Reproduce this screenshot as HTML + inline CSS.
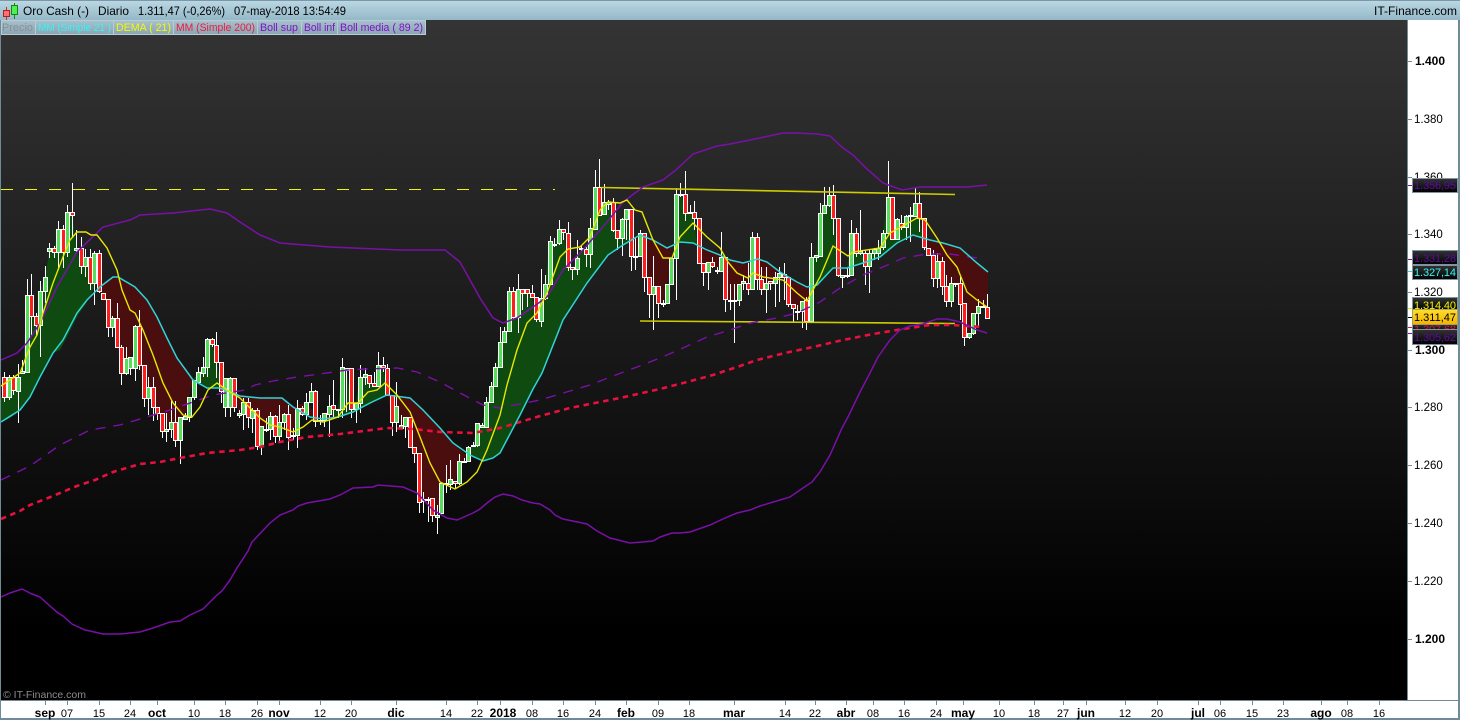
<!DOCTYPE html>
<html><head><meta charset="utf-8"><title>Oro Cash</title>
<style>
html,body{margin:0;padding:0;background:#fff;width:1460px;height:720px;overflow:hidden}
svg{display:block}
text{font-family:"Liberation Sans",Arial,sans-serif}
</style></head>
<body>
<svg width="1460" height="720" viewBox="0 0 1460 720" xmlns="http://www.w3.org/2000/svg">
<defs>
<linearGradient id="bg" x1="0" y1="0" x2="0" y2="1"><stop offset="0" stop-color="#343434"/><stop offset=".9" stop-color="#000"/><stop offset="1" stop-color="#000"/></linearGradient>
<linearGradient id="hd" x1="0" y1="0" x2="0" y2="1"><stop offset="0" stop-color="#bcd8e4"/><stop offset="1" stop-color="#94b8c8"/></linearGradient>
<linearGradient id="lg" x1="0" y1="0" x2="0" y2="1"><stop offset="0" stop-color="#a8c2ce"/><stop offset="1" stop-color="#88a4b2"/></linearGradient>
<linearGradient id="gold" x1="0" y1="0" x2="0" y2="1"><stop offset="0" stop-color="#ffdc30"/><stop offset="1" stop-color="#f0b400"/></linearGradient>
<linearGradient id="tag" x1="0" y1="0" x2="0" y2="1"><stop offset="0" stop-color="#333"/><stop offset="1" stop-color="#000"/></linearGradient>
</defs>
<rect width="1460" height="720" fill="#fff"/>
<rect x="1" y="20" width="1407" height="680" fill="url(#bg)"/>

<!-- cloud fills -->
<path fill="#0f4a10" d="M1 397L5 397 9 377 14 390 18 377 23 372 27 295 32 316 36 325 40 291 45 277 50 248 54 252 58 229 63 252 68 212 72 215 77 250 81 266 86 257 90 283 95 253 97 283 85 305 78 315 70 331 60 350 53 353 40 377 30 397 20 410 10 418 1 422Z"/>
<path fill="#4a0e0e" d="M97 283L104 299 108 327 113 318 117 347 122 373 126 358 131 357 135 326 140 365 144 398 149 387 153 407 158 413 162 431 167 429 171 422 176 440 180 417 185 416 189 397 193 380 177 358 167 338 157 317 147 300 135 287 118 277 105 281Z"/>
<path fill="#0f4a10" d="M193 380L199 372 203 367 208 339 212 344 217 362 221 388 207 388 193 380Z"/>
<path fill="#4a0e0e" d="M221 388L226 390 234 393 239 414 243 402 248 417 253 410 257 446 262 426 266 429 271 416 275 436 280 422 284 414 289 437 293 435 298 410 310 417 323 419 330 418 338 417 330 406 320 420 306 402 293 407 282 398 260 398 240 396Z"/>
<path fill="#0f4a10" d="M330 414L334 409 338 409 342 367 347 370 351 409 356 403 360 377 365 374 369 383 374 386 378 365 383 367 388 395 370 403 353 412 338 417Z"/>
<path fill="#4a0e0e" d="M388 395L392 422 397 406 401 428 406 417 410 447 415 453 419 502 424 499 428 499 433 515 437 520 442 483 446 483 451 479 455 483 460 461 464 461 466 455 453 443 440 428 423 410 410 398Z"/>
<path fill="#0f4a10" d="M466 455L473 445 478 423 482 425 487 402 491 386 496 367 500 342 505 331 509 291 514 317 518 289 523 293 527 293 532 297 536 319 541 298 545 284 550 241 555 244 559 229 564 232 568 267 573 269 577 258 582 248 586 254 591 228 595 187 600 215 604 202 609 202 613 230 618 238 622 219 627 209 631 240 623 245 608 255 587 283 563 320 542 373 533 389 520 415 500 453 493 458 483 461 470 455Z"/>
<path fill="#4a0e0e" d="M631 240L636 256 640 235 645 277 649 294 654 286 658 303 663 303 667 284 672 247 667 248 653 240 640 235Z"/>
<path fill="#0f4a10" d="M674 246L676 194 681 194 685 213 690 212 694 218 697 246 693 243 680 242Z"/>
<path fill="#4a0e0e" d="M697 246L703 272 708 262 712 266 717 270 721 257 726 299 730 300 735 300 739 284 744 283 748 289 752 261 757 262 762 289 766 283 771 283 775 277 780 273 784 277 789 304 793 308 798 311 802 301 807 321 810 287 807 287 797 282 780 272 767 262 758 259 743 263 730 260 720 255 707 250Z"/>
<path fill="#0f4a10" d="M809 287L811 257 816 255 820 213 825 205 829 195 834 218 838 268 847 268 852 233 856 253 861 253 865 263 869 253 874 249 878 248 883 233 888 197 893 239 897 219 902 227 906 216 911 216 915 203 919 218 924 240 913 235 897 243 880 257 863 263 847 268 833 268 817 285Z"/>
<path fill="#4a0e0e" d="M921 237L929 255 933 278 938 261 942 286 947 301 951 283 956 283 960 304 965 337 969 333 974 313 978 306 983 306 988 318 988 272 977 263 960 248 943 243 930 240Z"/>

<!-- dashed horizontal -->
<path d="M1 189.5H555" stroke="#f4f400" stroke-width="1" stroke-dasharray="12 12" fill="none"/>

<!-- wicks -->
<path fill="none" stroke="#fff" stroke-width="1" d="M4.5 372V402M9.5 375V400M13.5 375V395M18.5 364V423M22.5 360V373M27.5 279V372M31.5 274V336M36.5 313V335M40.5 281V357M45.5 266V303M49.5 243V258M54.5 246V258M58.5 221V270M63.5 225V268M67.5 205V257M72.5 183V238M76.5 230V252M81.5 237V274M85.5 249V277M90.5 249V290M94.5 251V305M99.5 250V293M108.5 299V337M112.5 316V337M117.5 303V347M121.5 345V385M126.5 347V375M130.5 357V375M135.5 325V381M139.5 310V370M144.5 365V407M148.5 377V415M153.5 377V421M157.5 407V420M162.5 413V438M166.5 413V442M171.5 401V438M175.5 401V447M180.5 417V464M185.5 413V420M189.5 397V422M194.5 380V400M198.5 367V383M203.5 357V377M207.5 338V377M212.5 338V347M216.5 332V378M221.5 362V403M225.5 378V417M230.5 377V417M234.5 378V412M239.5 410V418M243.5 398V430M248.5 398V428M252.5 408V433M257.5 408V450M261.5 426V455M266.5 418V432M270.5 412V440M275.5 415V443M279.5 405V443M284.5 413V430M288.5 405V450M293.5 428V440M297.5 400V448M302.5 406V416M306.5 393V420M311.5 383V403M315.5 390V427M320.5 415V425M324.5 413V427M329.5 395V437M333.5 380V418M338.5 409V418M342.5 358V418M346.5 368V412M351.5 368V418M356.5 403V423M360.5 365V413M365.5 368V385M369.5 375V388M374.5 372V387M378.5 352V387M383.5 357V372M387.5 364V395M392.5 395V436M396.5 382V432M401.5 415V428M405.5 417V438M410.5 417V447M414.5 447V463M419.5 453V513M423.5 492V513M428.5 497V522M432.5 498V522M437.5 505V534M441.5 483V515M446.5 465V493M450.5 460V490M455.5 481V488M459.5 454V485M464.5 458V463M468.5 446V462M473.5 442V447M477.5 423V447M482.5 423V428M486.5 397V428M491.5 382V403M495.5 363V387M500.5 327V368M504.5 327V343M509.5 287V332M513.5 287V320M518.5 274V333M522.5 289V310M527.5 289V307M532.5 285V298M536.5 297V322M541.5 269V327M545.5 275V300M550.5 236V285M554.5 238V247M559.5 220V245M563.5 229V240M568.5 222V271M572.5 267V280M577.5 240V275M581.5 245V252M586.5 247V267M590.5 218V268M595.5 170V229M599.5 159V215M604.5 184V214M608.5 200V210M613.5 198V232M617.5 230V250M622.5 218V256M626.5 209V240M631.5 209V271M635.5 237V270M640.5 230V257M644.5 233V292M649.5 277V318M653.5 256V330M658.5 286V318M663.5 300V307M667.5 284V304M671.5 258V285M676.5 188V300M680.5 183V197M685.5 171V221M690.5 205V214M694.5 201V230M699.5 218V263M703.5 263V286M708.5 262V290M712.5 257V268M717.5 267V274M721.5 232V272M725.5 257V312M730.5 284V310M734.5 284V343M739.5 284V306M743.5 275V290M748.5 263V295M752.5 232V290M757.5 233V290M761.5 267V295M766.5 267V313M770.5 281V290M775.5 272V307M779.5 267V302M784.5 263V300M788.5 277V307M793.5 304V323M797.5 305V320M802.5 301V328M806.5 297V330M811.5 243V322M816.5 255V262M820.5 203V257M824.5 187V213M829.5 187V207M833.5 185V235M838.5 218V277M842.5 275V288M847.5 268V278M851.5 220V275M856.5 228V257M860.5 210V255M865.5 250V285M869.5 250V293M874.5 248V260M878.5 240V260M883.5 230V250M888.5 161V233M892.5 197V239M897.5 218V240M901.5 215V230M906.5 215V240M910.5 207V242M915.5 188V217M919.5 192V232M924.5 218V250M928.5 248V256M933.5 250V287M937.5 253V288M942.5 257V295M946.5 275V307M951.5 277V307M955.5 283V287M960.5 277V320M964.5 303V346M969.5 333V339M973.5 313V335M978.5 299V328M983.5 300V308M987.5 294V319"/>

<!-- red bodies -->
<path fill="#ff1e1e" stroke="#fff" stroke-width="1" d="M2.5 377.5h4v20h-4zM11.5 377.5h4v13h-4zM29.5 295.5h4v21h-4zM34.5 316.5h4v9h-4zM52.5 248.5h4v4h-4zM61.5 229.5h4v23h-4zM70.5 212.5h4v3h-4zM79.5 248.5h4v18h-4zM88.5 257.5h4v26h-4zM97.5 253.5h4v38h-4zM101.5 293.5h4v6h-4zM106.5 299.5h4v28h-4zM115.5 318.5h4v29h-4zM119.5 347.5h4v26h-4zM137.5 326.5h4v39h-4zM142.5 365.5h4v33h-4zM151.5 387.5h4v20h-4zM155.5 407.5h4v6h-4zM160.5 413.5h4v18h-4zM173.5 422.5h4v18h-4zM210.5 339.5h4v5h-4zM214.5 345.5h4v17h-4zM219.5 362.5h4v29h-4zM232.5 378.5h4v29h-4zM246.5 402.5h4v15h-4zM255.5 410.5h4v36h-4zM273.5 416.5h4v20h-4zM286.5 414.5h4v23h-4zM300.5 408.5h4v6h-4zM313.5 391.5h4v30h-4zM331.5 405.5h4v4h-4zM349.5 368.5h4v41h-4zM367.5 375.5h4v8h-4zM372.5 383.5h4v3h-4zM381.5 365.5h4v2h-4zM385.5 368.5h4v27h-4zM390.5 395.5h4v27h-4zM408.5 417.5h4v30h-4zM412.5 447.5h4v6h-4zM417.5 453.5h4v49h-4zM430.5 498.5h4v17h-4zM453.5 481.5h4v2h-4zM511.5 291.5h4v26h-4zM520.5 289.5h4v4h-4zM525.5 289.5h4v4h-4zM530.5 293.5h4v4h-4zM534.5 297.5h4v22h-4zM561.5 229.5h4v3h-4zM566.5 233.5h4v34h-4zM570.5 267.5h4v2h-4zM584.5 249.5h4v5h-4zM597.5 187.5h4v28h-4zM611.5 202.5h4v28h-4zM615.5 230.5h4v8h-4zM629.5 209.5h4v47h-4zM642.5 233.5h4v44h-4zM647.5 277.5h4v17h-4zM656.5 286.5h4v17h-4zM683.5 194.5h4v19h-4zM692.5 212.5h4v6h-4zM697.5 218.5h4v45h-4zM701.5 263.5h4v9h-4zM710.5 262.5h4v4h-4zM723.5 257.5h4v42h-4zM746.5 283.5h4v6h-4zM755.5 237.5h4v42h-4zM759.5 279.5h4v10h-4zM768.5 281.5h4v2h-4zM782.5 274.5h4v3h-4zM786.5 277.5h4v27h-4zM791.5 304.5h4v4h-4zM804.5 300.5h4v21h-4zM831.5 195.5h4v23h-4zM836.5 218.5h4v57h-4zM854.5 233.5h4v20h-4zM863.5 253.5h4v13h-4zM890.5 197.5h4v42h-4zM899.5 223.5h4v4h-4zM917.5 203.5h4v15h-4zM922.5 218.5h4v29h-4zM926.5 248.5h4v7h-4zM931.5 255.5h4v23h-4zM940.5 261.5h4v25h-4zM944.5 286.5h4v15h-4zM958.5 283.5h4v21h-4zM962.5 303.5h4v34h-4zM985.5 307.5h4v11h-4z"/>

<!-- green bodies -->
<path fill="#58dc5c" stroke="#fff" stroke-width="1" d="M7.5 377.5h4v20h-4zM16.5 377.5h4v14h-4zM20.5 371.5h4v2h-4zM25.5 295.5h4v77h-4zM38.5 291.5h4v34h-4zM43.5 277.5h4v14h-4zM47.5 248.5h4v3h-4zM56.5 229.5h4v23h-4zM65.5 212.5h4v40h-4zM74.5 248.5h4v2h-4zM83.5 257.5h4v9h-4zM92.5 253.5h4v30h-4zM110.5 318.5h4v9h-4zM124.5 358.5h4v15h-4zM128.5 357.5h4v11h-4zM133.5 326.5h4v42h-4zM146.5 387.5h4v11h-4zM164.5 429.5h4v2h-4zM169.5 422.5h4v7h-4zM178.5 417.5h4v23h-4zM183.5 416.5h4v3h-4zM187.5 397.5h4v20h-4zM192.5 380.5h4v17h-4zM196.5 372.5h4v10h-4zM201.5 367.5h4v6h-4zM205.5 339.5h4v28h-4zM223.5 378.5h4v29h-4zM228.5 378.5h4v29h-4zM237.5 413.5h4v2h-4zM241.5 402.5h4v12h-4zM250.5 410.5h4v8h-4zM259.5 426.5h4v20h-4zM264.5 429.5h4v1h-4zM268.5 416.5h4v13h-4zM277.5 422.5h4v14h-4zM282.5 414.5h4v8h-4zM291.5 435.5h4v1h-4zM295.5 408.5h4v27h-4zM304.5 402.5h4v12h-4zM309.5 391.5h4v11h-4zM318.5 420.5h4v1h-4zM322.5 413.5h4v7h-4zM327.5 406.5h4v8h-4zM336.5 409.5h4v1h-4zM340.5 367.5h4v42h-4zM344.5 368.5h4v2h-4zM354.5 403.5h4v6h-4zM358.5 377.5h4v26h-4zM363.5 374.5h4v3h-4zM376.5 365.5h4v21h-4zM394.5 406.5h4v16h-4zM399.5 425.5h4v3h-4zM403.5 417.5h4v9h-4zM421.5 499.5h4v2h-4zM426.5 499.5h4v1h-4zM435.5 515.5h4v2h-4zM439.5 483.5h4v30h-4zM444.5 483.5h4v1h-4zM448.5 479.5h4v5h-4zM457.5 461.5h4v22h-4zM462.5 461.5h4v1h-4zM466.5 447.5h4v14h-4zM471.5 445.5h4v1h-4zM475.5 423.5h4v22h-4zM480.5 425.5h4v2h-4zM484.5 402.5h4v25h-4zM489.5 386.5h4v16h-4zM493.5 367.5h4v19h-4zM498.5 342.5h4v25h-4zM502.5 331.5h4v11h-4zM507.5 291.5h4v40h-4zM516.5 289.5h4v28h-4zM539.5 298.5h4v23h-4zM543.5 284.5h4v14h-4zM548.5 241.5h4v43h-4zM552.5 244.5h4v1h-4zM557.5 229.5h4v14h-4zM575.5 258.5h4v11h-4zM579.5 248.5h4v1h-4zM588.5 228.5h4v26h-4zM593.5 187.5h4v42h-4zM602.5 202.5h4v12h-4zM606.5 202.5h4v2h-4zM620.5 219.5h4v19h-4zM624.5 209.5h4v10h-4zM633.5 256.5h4v1h-4zM638.5 233.5h4v23h-4zM651.5 286.5h4v8h-4zM661.5 303.5h4v1h-4zM665.5 284.5h4v19h-4zM669.5 258.5h4v26h-4zM674.5 194.5h4v64h-4zM678.5 194.5h4v1h-4zM688.5 212.5h4v1h-4zM706.5 262.5h4v10h-4zM715.5 270.5h4v1h-4zM719.5 257.5h4v14h-4zM728.5 300.5h4v1h-4zM732.5 300.5h4v1h-4zM737.5 284.5h4v16h-4zM741.5 281.5h4v2h-4zM750.5 237.5h4v52h-4zM764.5 283.5h4v6h-4zM773.5 277.5h4v6h-4zM777.5 273.5h4v4h-4zM795.5 311.5h4v1h-4zM800.5 301.5h4v10h-4zM809.5 257.5h4v64h-4zM814.5 255.5h4v2h-4zM818.5 213.5h4v43h-4zM822.5 205.5h4v8h-4zM827.5 195.5h4v10h-4zM840.5 275.5h4v2h-4zM845.5 275.5h4v1h-4zM849.5 233.5h4v42h-4zM858.5 251.5h4v2h-4zM867.5 253.5h4v13h-4zM872.5 249.5h4v4h-4zM876.5 248.5h4v5h-4zM881.5 233.5h4v14h-4zM886.5 197.5h4v36h-4zM895.5 219.5h4v20h-4zM904.5 216.5h4v11h-4zM908.5 215.5h4v1h-4zM913.5 203.5h4v13h-4zM935.5 261.5h4v17h-4zM949.5 283.5h4v18h-4zM953.5 283.5h4v1h-4zM967.5 333.5h4v4h-4zM971.5 313.5h4v20h-4zM976.5 306.5h4v7h-4zM981.5 306.5h4v1h-4z"/>

<!-- Trend lines -->
<path d="M601 187.5L955 194.5M640 321L955 323.5" stroke="#cccc00" stroke-width="1.6" fill="none"/>

<!-- MM 200 -->
<path fill="none" stroke="#e8103c" stroke-width="2.6" stroke-dasharray="5.5 4.5" d="M1 519L20 511 30 505 48 498 60 493 77 486 95 480 113 472 140 464 160 462 180 458 207 453 240 450 260 447 280 442 307 437 340 434 387 428 413 429 440 432 473 433 500 428 540 416 570 408 620 398 660 389 687 382 713 375 740 366 757 360 785 353 813 347 843 340 873 334 903 329 930 325 952 325 982 327"/>

<!-- Boll media -->
<path fill="none" stroke="#7a10a8" stroke-width="1.4" stroke-dasharray="10 8" d="M1 480L30 466 60 445 90 430 120 425 170 410 213 395 245 390 255 385 273 381 297 377 320 374 347 370 367 369 397 368 417 372 440 382 460 393 483 405 500 408 540 400 590 385 613 376 637 367 660 358 683 348 707 337 730 330 750 323 777 318 797 313 820 302 840 288 863 275 883 267 903 258 927 254 950 254 977 258"/>

<!-- Boll sup -->
<path fill="none" stroke="#7a10a8" stroke-width="1.5" d="M1 360L17 353 27 343 40 323 57 287 77 252 103 227 130 220 140 215 173 213 210 209 227 213 240 222 260 235 280 243 330 247 400 250 445 250 460 262 480 298 493 318 503 323 517 318 533 307 547 297 563 270 583 250 607 222 623 202 643 187 663 180 677 169 693 154 717 146 730 144 750 140 783 133 797 133 817 134 830 136 843 148 853 155 867 169 883 183 902 190 920 187 943 187 967 187 987 185"/>

<!-- Boll inf -->
<path fill="none" stroke="#7a10a8" stroke-width="1.5" d="M1 597L10 593 22 589 32 594 40 597 50 606 58 613 63 616 72 624 85 630 90 631 103 634 120 634 140 632 153 628 170 622 180 621 190 615 203 609 217 595 222 591 230 580 237 568 248 551 252 542 270 523 280 515 293 510 298 506 307 503 330 499 340 495 353 488 373 487 378 485 403 487 417 493 433 510 447 518 457 520 473 513 480 509 487 503 495 497 503 494 513 496 522 500 533 503 540 504 550 510 555 515 563 519 587 524 597 531 610 538 630 543 643 542 653 541 660 537 672 533 680 533 690 532 710 525 725 518 737 513 750 510 760 506 780 500 790 497 800 490 812 482 820 472 830 455 842 428 848 417 860 392 870 373 878 357 890 340 900 330 910 326 923 324 937 319 947 319 960 322 977 330 987 333"/>

<!-- MM 21 cyan -->
<path fill="none" stroke="#2ed4d8" stroke-width="1.5" d="M1 422L20 410 30 397 40 377 53 353 63 340 77 313 87 300 100 287 113 277 118 277 135 287 147 300 157 317 167 338 177 358 193 380 207 388 220 388 233 393 240 396 260 398 282 398 293 407 310 417 323 419 338 417 353 412 370 403 387 395 410 398 423 410 440 428 453 443 470 455 483 461 493 458 500 453 520 415 533 389 542 373 563 320 587 283 608 255 623 245 640 235 653 240 667 248 680 242 693 243 707 250 720 255 730 260 743 263 758 259 767 262 780 272 797 282 807 287 817 285 833 268 847 268 863 263 880 257 897 243 913 235 930 240 943 243 960 248 977 263 988 272"/>

<!-- DEMA yellow -->
<path fill="none" stroke="#e8e800" stroke-width="1.4" d="M1 386L20 373 30 347 37 335 43 313 53 283 63 257 70 240 77 232 86 232 91 235 97 235 107 248 117 270 122 290 130 310 135 313 143 330 153 355 163 383 173 403 183 415 192 417 200 407 208 390 217 383 227 390 240 398 250 408 260 418 270 425 280 427 293 432 303 427 312 420 323 422 338 417 348 403 358 403 368 392 377 390 385 383 397 395 410 412 420 437 430 463 440 482 455 489 467 482 477 472 487 450 500 415 507 385 517 350 527 323 537 313 547 293 560 257 568 249 580 247 590 237 600 210 608 202 620 203 627 200 635 210 642 212 653 240 663 258 672 258 680 237 693 223 707 237 720 248 728 262 737 273 748 278 753 273 763 277 783 280 797 293 807 301 820 277 833 246 848 256 853 252 880 248 890 233 917 218 925 220 937 238 947 255 957 267 967 292 977 300 987 307"/>

<!-- Watermark -->
<text x="3" y="698" font-size="10.5" fill="#8c8c8c" textLength="83" lengthAdjust="spacingAndGlyphs">© IT-Finance.com</text>

<!-- Header -->
<rect x="0" y="0" width="1460" height="20" fill="url(#hd)"/>
<rect x="0" y="0" width="1460" height="1" fill="#7a98a8"/>
<path d="M6.5 7V20" stroke="#c03030" stroke-width="1" fill="none"/>
<rect x="3.5" y="10.5" width="6" height="6" fill="#ff7070" stroke="#b02020"/>
<path d="M14.5 3V19" stroke="#108810" stroke-width="1" fill="none"/>
<rect x="11.5" y="5.5" width="6" height="9" fill="#50ee50" stroke="#108810"/>
<text x="23" y="15" font-size="12" fill="#000" textLength="66" lengthAdjust="spacingAndGlyphs">Oro Cash (-)</text>
<text x="98" y="15" font-size="12" fill="#000" textLength="31" lengthAdjust="spacingAndGlyphs">Diario</text>
<text x="138" y="15" font-size="12" fill="#000" textLength="87" lengthAdjust="spacingAndGlyphs">1.311,47 (-0,26%)</text>
<text x="234" y="15" font-size="12" fill="#000" textLength="112" lengthAdjust="spacingAndGlyphs">07-may-2018 13:54:49</text>
<text x="1374" y="15" font-size="12" fill="#000" textLength="83">IT-Finance.com</text>

<!-- Legend -->
<rect x="0" y="20" width="426" height="15" fill="url(#lg)"/>
<g fill="none" stroke="#b8ccd6"><rect x="1.5" y="20.5" width="34" height="14"/><rect x="35.5" y="20.5" width="78" height="14"/><rect x="113.5" y="20.5" width="60" height="14"/><rect x="173.5" y="20.5" width="84" height="14"/><rect x="257.5" y="20.5" width="44" height="14"/><rect x="301.5" y="20.5" width="36" height="14"/><rect x="337.5" y="20.5" width="88" height="14"/></g>
<g font-size="11">
<text x="2" y="31" fill="#8a8f92" textLength="31" lengthAdjust="spacingAndGlyphs">Precio</text>
<text x="38" y="31" fill="#38f4f4" textLength="73" lengthAdjust="spacingAndGlyphs">MM (Simple 21 )</text>
<text x="116" y="31" fill="#f8f800" textLength="55" lengthAdjust="spacingAndGlyphs">DEMA ( 21)</text>
<text x="176" y="31" fill="#f01840" textLength="79" lengthAdjust="spacingAndGlyphs">MM (Simple 200)</text>
<text x="260" y="31" fill="#8010c8" textLength="38" lengthAdjust="spacingAndGlyphs">Boll sup</text>
<text x="304" y="31" fill="#8010c8" textLength="31" lengthAdjust="spacingAndGlyphs">Boll inf</text>
<text x="340" y="31" fill="#8010c8" textLength="83" lengthAdjust="spacingAndGlyphs">Boll media ( 89 2)</text>
</g>

<!-- Axis frame -->
<rect x="0" y="20" width="1" height="700" fill="#6f8b9a"/>
<rect x="1407" y="20" width="1" height="681" fill="#6f8b9a"/>
<rect x="0" y="700" width="1460" height="1" fill="#6f8b9a"/>
<rect x="0" y="718" width="1460" height="2" fill="#6f8b9a"/>
<rect x="1458" y="20" width="2" height="700" fill="#6f8b9a"/>

<!-- Price ticks -->
<path stroke="#6f8b9a" fill="none" d="M1408 61.5h4M1408 119.5h4M1408 177.5h4M1408 234.5h4M1408 292.5h4M1408 350.5h4M1408 407.5h4M1408 465.5h4M1408 523.5h4M1408 581.5h4M1408 639.5h4"/>
<g font-size="12" font-weight="bold" fill="#000">
<text x="1415" y="65">1.400</text><text x="1415" y="354">1.300</text><text x="1415" y="643">1.200</text>
</g>
<g font-size="11.5" fill="#000">
<text x="1414" y="123">1.380</text><text x="1414" y="181">1.360</text><text x="1414" y="238">1.340</text><text x="1414" y="296">1.320</text><text x="1414" y="411">1.280</text><text x="1414" y="469">1.260</text><text x="1414" y="527">1.240</text><text x="1414" y="585">1.220</text>
</g>
<path fill="none" d="M1408 185.5h4" stroke="#7a10a8"/><path fill="none" d="M1408 259.5h4" stroke="#7a10a8"/><path fill="none" d="M1408 271.5h4" stroke="#2ed4d8"/><path fill="none" d="M1408 308.5h4" stroke="#e8e800"/><path fill="none" d="M1408 317.5h4" stroke="#000"/><path fill="none" d="M1408 327.5h4" stroke="#e8103c"/><path fill="none" d="M1408 333.5h4" stroke="#7a10a8"/>

<!-- Price tags -->
<g stroke="#7e959f" fill="url(#tag)">
<rect x="1412.5" y="178.5" width="45" height="14"/>
<rect x="1412.5" y="250.5" width="45" height="14"/>
<rect x="1412.5" y="265.5" width="45" height="14"/>
<rect x="1412.5" y="324.5" width="45" height="8"/>
<rect x="1412.5" y="297.5" width="45" height="13"/>
</g>
<g font-size="11">
<text x="1414" y="189" fill="#5c0ca0" textLength="42">1.356,95</text>
<text x="1414" y="262" fill="#5c0ca0" textLength="42">1.331,28</text>
<text x="1414" y="276" fill="#38f4f4" textLength="42">1.327,14</text>
<text x="1414" y="309" fill="#f4f400" textLength="42">1.314,40</text>
<text x="1414" y="333" fill="#e8103c" textLength="42">1.307,68</text>
</g>
<rect x="1412.5" y="309.5" width="45" height="15" fill="url(#gold)" stroke="#a8a060"/>
<text x="1414" y="321" font-size="11" fill="#000" textLength="42">1.311,47</text>
<rect x="1412.5" y="329.5" width="45" height="15" fill="url(#tag)" stroke="#7e959f"/>
<text x="1414" y="341" font-size="11" fill="#5c0ca0" textLength="42">1.305,62</text>

<!-- Date ticks -->
<path stroke="#6f8b9a" fill="none" d="M45.5 701v4M67.5 701v4M99.5 701v4M130.5 701v4M157.5 701v4M194.5 701v4M225.5 701v4M257.5 701v4M279.5 701v4M320.5 701v4M351.5 701v4M396.5 701v4M446.5 701v4M477.5 701v4M500.5 701v4M532.5 701v4M563.5 701v4M595.5 701v4M626.5 701v4M658.5 701v4M689.5 701v4M734.5 701v4M785.5 701v4M815.5 701v4M846.5 701v4M873.5 701v4M904.5 701v4M936.5 701v4M963.5 701v4M999.5 701v4M1034.5 701v4M1063.5 701v4M1086.5 701v4M1125.5 701v4M1157.5 701v4M1198.5 701v4M1220.5 701v4M1252.5 701v4M1283.5 701v4M1321.5 701v4M1347.5 701v4M1379.5 701v4"/>
<g font-size="12" font-weight="bold" fill="#000" text-anchor="middle">
<text x="45" y="717">sep</text><text x="157" y="717">oct</text><text x="279" y="717">nov</text><text x="396" y="717">dic</text><text x="503" y="717">2018</text><text x="626" y="717">feb</text><text x="734" y="717">mar</text><text x="846" y="717">abr</text><text x="963" y="717">may</text><text x="1086" y="717">jun</text><text x="1198" y="717">jul</text><text x="1321" y="717">ago</text>
</g>
<g font-size="11" fill="#000" text-anchor="middle">
<text x="67" y="717">07</text><text x="99" y="717">15</text><text x="130" y="717">24</text><text x="194" y="717">10</text><text x="225" y="717">18</text><text x="257" y="717">26</text><text x="320" y="717">12</text><text x="351" y="717">20</text><text x="446" y="717">14</text><text x="477" y="717">22</text><text x="532" y="717">08</text><text x="563" y="717">16</text><text x="595" y="717">24</text><text x="658" y="717">09</text><text x="689" y="717">18</text><text x="785" y="717">14</text><text x="815" y="717">22</text><text x="873" y="717">08</text><text x="904" y="717">16</text><text x="936" y="717">24</text><text x="999" y="717">10</text><text x="1034" y="717">18</text><text x="1063" y="717">27</text><text x="1125" y="717">12</text><text x="1157" y="717">20</text><text x="1220" y="717">06</text><text x="1252" y="717">15</text><text x="1283" y="717">23</text><text x="1347" y="717">08</text><text x="1379" y="717">16</text>
</g>
</svg>
</body></html>
